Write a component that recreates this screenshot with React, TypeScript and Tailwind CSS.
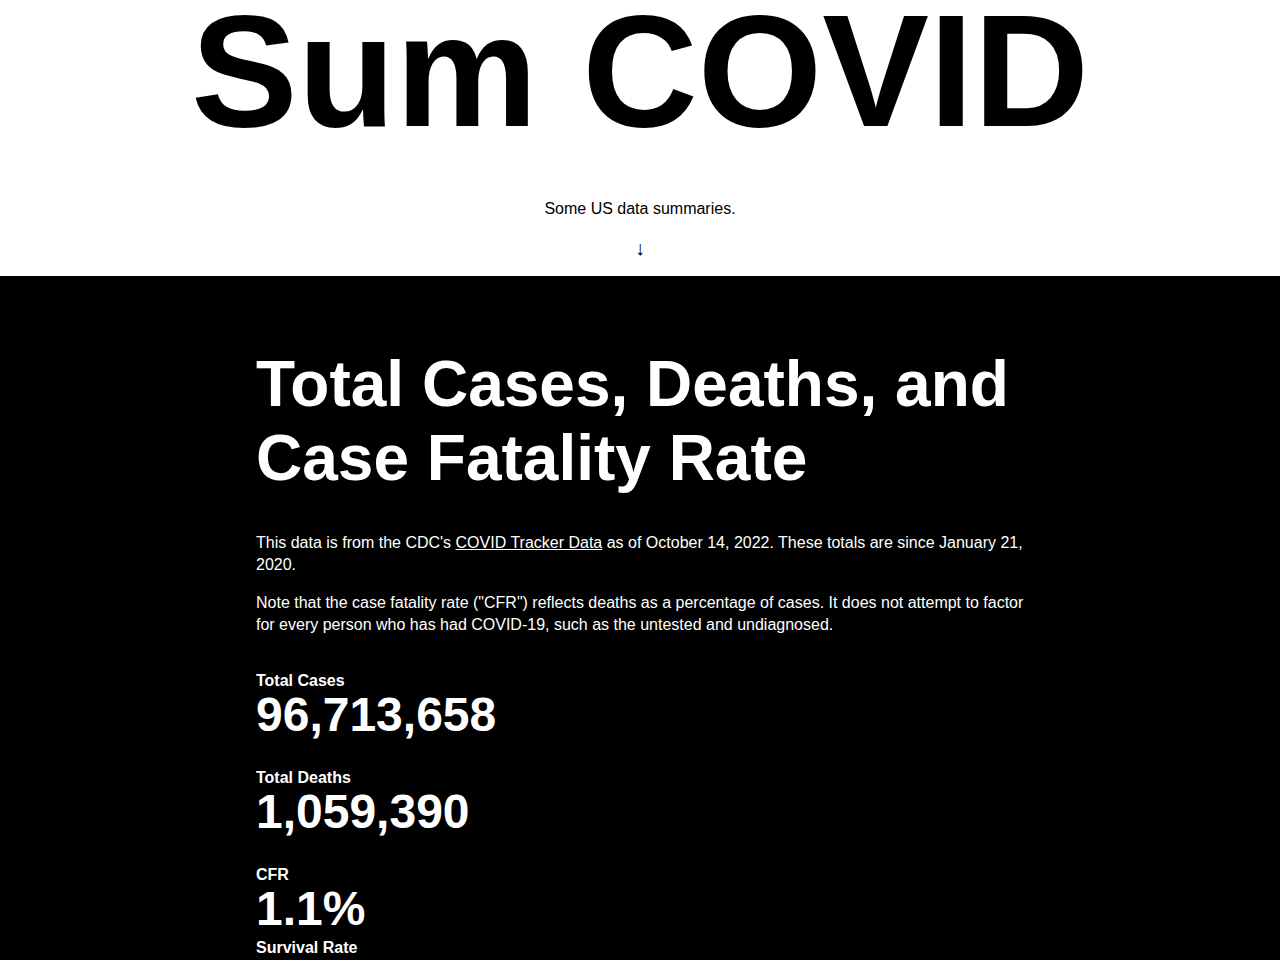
const font = { fontFamily: '"Liberation Sans", Arial, sans-serif' };

const Stat = ({ label, value, className }: { label: string; value: string; className?: string }) => (
  <div className={className}>
    <p className="text-base leading-5 font-bold">{label}</p>
    <p className="text-[48px] leading-none font-bold">{value}</p>
  </div>
);

export default function App() {
  return (
    <div style={font} className="bg-white text-black">
      <header className="flex flex-col items-center pb-4">
        <h1 className="text-[160px] leading-[0.89] font-bold">Sum COVID</h1>
        <p className="mt-[55px] text-base leading-6">Some US data summaries.</p>
        <p className="mt-[15px] text-xl leading-6">↓</p>
      </header>

      <section className="bg-black text-white pt-[72px] pb-24">
        <div className="max-w-3xl mx-auto">
          <h2 className="text-[64px] leading-[1.15] font-bold">
            Total Cases, Deaths, and Case Fatality Rate
          </h2>
          <p className="mt-[36px] text-base leading-[22px]">
            This data is from the CDC's{" "}
            <a href="#" className="underline">
              COVID Tracker Data
            </a>{" "}
            as of October 14, 2022. These totals are since January 21, 2020.
          </p>
          <p className="mt-4 text-base leading-[22px]">
            Note that the case fatality rate ("CFR") reflects deaths as a percentage of cases. It does not attempt to
            factor for every person who has had COVID-19, such as the untested and undiagnosed.
          </p>

          <div className="mt-[35px]">
            <Stat label="Total Cases" value="96,713,658" className="mb-[29px]" />
            <Stat label="Total Deaths" value="1,059,390" className="mb-[29px]" />
            <Stat label="CFR" value="1.1%" className="mb-[5px]" />
            <Stat label="Survival Rate" value="98.9%" />
          </div>
        </div>
      </section>
    </div>
  );
}
